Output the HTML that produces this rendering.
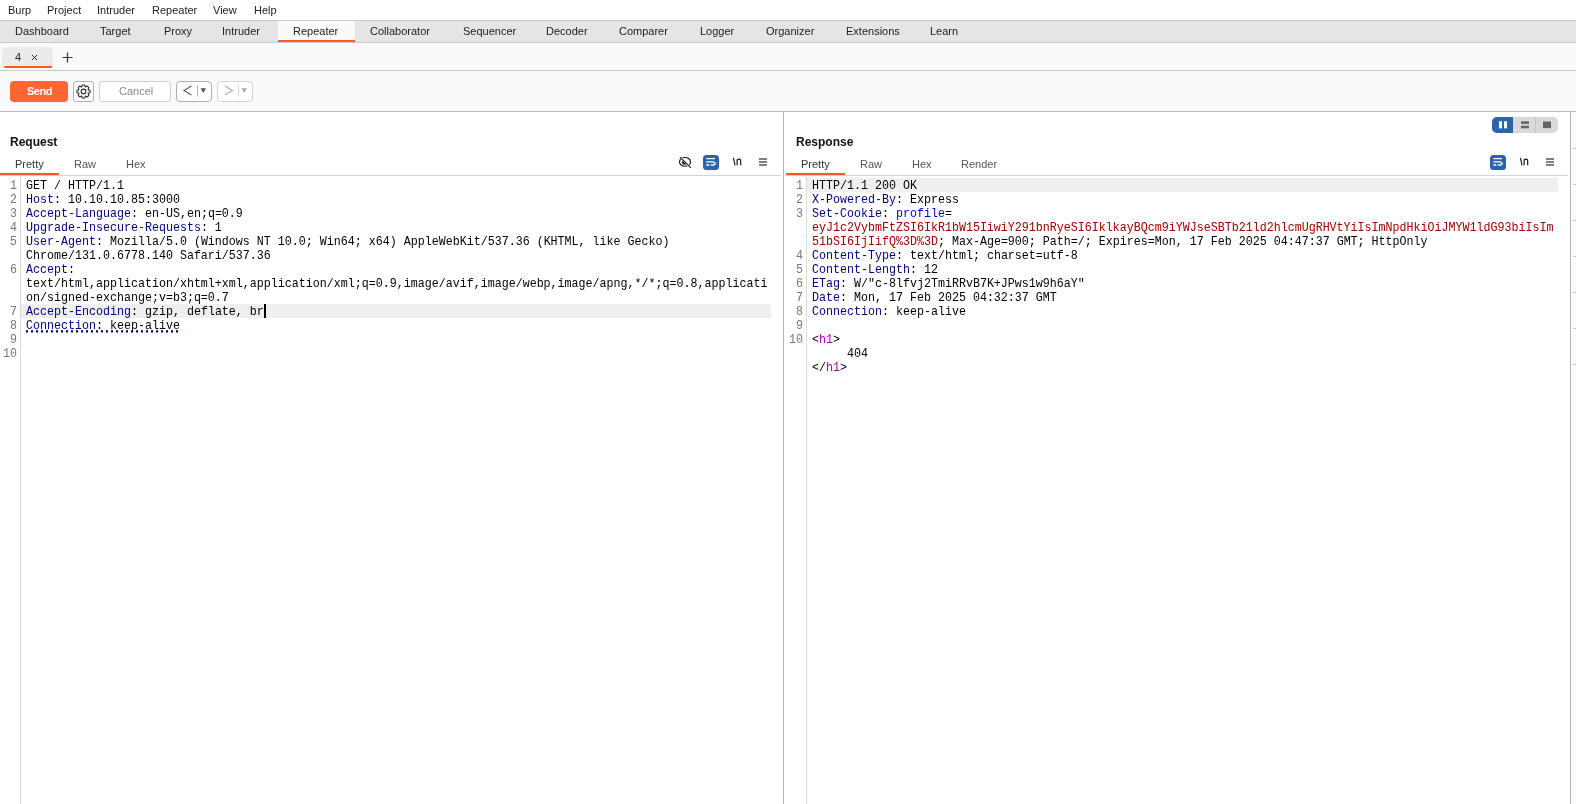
<!DOCTYPE html>
<html><head><meta charset="utf-8">
<style>
*{margin:0;padding:0;box-sizing:border-box}
html,body{width:1576px;height:804px;overflow:hidden;background:#fff}
body{position:relative;font-family:"Liberation Sans",sans-serif;font-size:11px;color:#222}
.a{position:absolute}
.t{position:absolute;white-space:pre;line-height:14px;will-change:transform}
.hl{position:absolute;height:1px}
.vl{position:absolute;width:1px}
.mono{font-family:"Liberation Mono",monospace;font-size:11.667px;line-height:14px;white-space:pre;color:#000}
.row{position:absolute;height:14px;white-space:pre;will-change:transform;transform:scaleY(1.15);transform-origin:0 3px}
.ln{position:absolute;height:14px;will-change:transform;text-align:right;color:#787878;transform:scaleY(1.15);transform-origin:0 3px;font-family:"Liberation Mono",monospace;font-size:11.667px;line-height:14px}
.k{color:#000080}
.pb{color:#0000c0}
.rd{color:#a00000}
.mg{color:#a800b8}
.dot{background-image:linear-gradient(90deg,#000080 2px,transparent 2px);background-size:5px 2px;background-repeat:repeat-x;background-position:0 11px;padding-bottom:0}
</style></head><body>
<!-- menu bar -->
<div class="a" style="left:0;top:0;width:1576px;height:20px;background:#fff"></div>
<div class="t" style="left:8px;top:3px">Burp</div>
<div class="t" style="left:47px;top:3px">Project</div>
<div class="t" style="left:97px;top:3px">Intruder</div>
<div class="t" style="left:152px;top:3px">Repeater</div>
<div class="t" style="left:213px;top:3px">View</div>
<div class="t" style="left:254px;top:3px">Help</div>
<div class="hl" style="left:0;top:20px;width:1576px;background:#c8c8c8"></div>
<!-- tab bar -->
<div class="a" style="left:0;top:21px;width:1576px;height:21px;background:#e5e5e5"></div>
<div class="a" style="left:278px;top:21px;width:77px;height:21px;background:#fafafa"></div>
<div class="a" style="left:278px;top:40px;width:77px;height:2px;background:#ff5a1f"></div>
<div class="hl" style="left:0;top:42px;width:1576px;background:#c6cbcc"></div>
<div class="t" style="left:15.0px;top:24px">Dashboard</div>
<div class="t" style="left:100.0px;top:24px">Target</div>
<div class="t" style="left:163.8px;top:24px">Proxy</div>
<div class="t" style="left:221.5px;top:24px">Intruder</div>
<div class="t" style="left:292.8px;top:24px">Repeater</div>
<div class="t" style="left:369.5px;top:24px">Collaborator</div>
<div class="t" style="left:462.5px;top:24px">Sequencer</div>
<div class="t" style="left:545.5px;top:24px">Decoder</div>
<div class="t" style="left:618.9px;top:24px">Comparer</div>
<div class="t" style="left:699.5px;top:24px">Logger</div>
<div class="t" style="left:765.5px;top:24px">Organizer</div>
<div class="t" style="left:845.5px;top:24px">Extensions</div>
<div class="t" style="left:929.5px;top:24px">Learn</div>
<!-- sub tab row -->
<div class="a" style="left:0;top:43px;width:1576px;height:27px;background:#fafafa"></div>
<div class="hl" style="left:0;top:70px;width:1576px;background:#c6cbcc"></div>
<!-- toolbar -->
<div class="a" style="left:0;top:71px;width:1576px;height:40px;background:#fafafa"></div>
<div class="hl" style="left:0;top:111px;width:1576px;background:#bdb5b5"></div>

<!-- subtab -->
<div class="a" style="left:2px;top:47px;width:51px;height:20px;background:#ebebeb;border-radius:4px 4px 0 0"></div>
<div class="a" style="left:4px;top:66px;width:48px;height:2px;background:#ff5a1f;border-radius:1px"></div>
<div class="t" style="left:15px;top:50px;color:#222">4</div>
<svg class="a" style="left:31px;top:54px" width="7" height="7" viewBox="0 0 7 7"><path d="M1 1L6 6M6 1L1 6" stroke="#222" stroke-width="0.95"/></svg>
<svg class="a" style="left:62px;top:52px" width="11" height="11" viewBox="0 0 11 11"><path d="M5.5 0.5V10.5M0.5 5.5H10.5" stroke="#333" stroke-width="1.2"/></svg>
<!-- toolbar buttons -->
<div class="a" style="left:10px;top:81px;width:58px;height:21px;background:#ff6633;border-radius:4px"></div>
<div class="t" style="left:27px;top:84px;color:#fff;font-weight:bold;letter-spacing:-0.5px">Send</div>
<div class="a" style="left:73px;top:81px;width:21px;height:21px;background:#fff;border:1px solid #b5b0b0;border-radius:3px"></div>
<svg class="a" style="left:75px;top:83px" width="17" height="17" viewBox="0 0 17 17" id="gear"><path d="M7.47 1.98 L9.53 1.98 L10.41 3.88 L12.38 3.16 L13.84 4.62 L13.12 6.59 L15.02 7.47 L15.02 9.53 L13.12 10.41 L13.84 12.38 L12.38 13.84 L10.41 13.12 L9.53 15.02 L7.47 15.02 L6.59 13.12 L4.62 13.84 L3.16 12.38 L3.88 10.41 L1.98 9.53 L1.98 7.47 L3.88 6.59 L3.16 4.62 L4.62 3.16 L6.59 3.88Z" fill="none" stroke="#333" stroke-width="1.2" stroke-linejoin="round"/><circle cx="8.5" cy="8.5" r="2.3" fill="none" stroke="#333" stroke-width="1.2"/></svg>
<div class="a" style="left:99px;top:81px;width:72px;height:21px;background:#fff;border:1px solid #cfcfcf;border-radius:3px"></div>
<div class="t" style="left:119px;top:84px;color:#8a8a8a">Cancel</div>
<div class="a" style="left:176px;top:81px;width:36px;height:21px;background:#fff;border:1px solid #b5adad;border-radius:4px"></div>
<svg class="a" style="left:176px;top:81px" width="36" height="21" viewBox="0 0 36 21"><path d="M15.5 5L8 9.5L15.5 14" fill="none" stroke="#555" stroke-width="1.1"/><path d="M21.5 4V15.5" stroke="#999" stroke-width="0.8"/><path d="M24.5 7.3H30L27.25 12Z" fill="#555"/></svg>
<div class="a" style="left:217px;top:81px;width:36px;height:21px;background:#fff;border:1px solid #d4d0d0;border-radius:4px"></div>
<svg class="a" style="left:217px;top:81px" width="36" height="21" viewBox="0 0 36 21"><path d="M8 5L15.5 9.5L8 14" fill="none" stroke="#aaa" stroke-width="1.1"/><path d="M21.5 4V15.5" stroke="#ccc" stroke-width="0.8"/><path d="M24.5 7.3H30L27.25 12Z" fill="#aaa"/></svg>
<!-- panels -->
<div class="vl" style="left:783px;top:112px;height:692px;background:#bab5b5"></div>
<div class="vl" style="left:1570px;top:112px;height:692px;background:#b6b1b1"></div>
<div class="a" style="left:1571px;top:112px;width:5px;height:692px;background:#fafafa"></div>
<div class="hl" style="left:1573px;top:148px;width:3px;background:#c8c8c8"></div>
<div class="hl" style="left:1573px;top:184px;width:3px;background:#c8c8c8"></div>
<div class="hl" style="left:1573px;top:220px;width:3px;background:#c8c8c8"></div>
<div class="hl" style="left:1573px;top:256px;width:3px;background:#c8c8c8"></div>
<div class="hl" style="left:1573px;top:292px;width:3px;background:#c8c8c8"></div>
<div class="hl" style="left:1573px;top:328px;width:3px;background:#c8c8c8"></div>
<div class="hl" style="left:1573px;top:364px;width:3px;background:#c8c8c8"></div>
<!-- request header -->
<div class="t" style="left:10px;top:135px;font-size:12px;font-weight:bold;color:#111">Request</div>
<div class="t" style="left:15px;top:157px;color:#333">Pretty</div>
<div class="t" style="left:74px;top:157px;color:#555">Raw</div>
<div class="t" style="left:126px;top:157px;color:#555">Hex</div>
<div class="a" style="left:0;top:173px;width:59px;height:2px;background:#ff5a1f"></div>
<div class="hl" style="left:0;top:175px;width:781px;background:#cfd4d4"></div>
<svg class="a" style="left:675px;top:152px" width="22" height="20" viewBox="0 0 22 20"><defs><clipPath id="pc"><path d="M0 1.2L20 21.2L0 21.2Z"/></clipPath></defs><ellipse cx="10" cy="9.9" rx="5.5" ry="4.4" fill="none" stroke="#111" stroke-width="1.1"/><path d="M5 5L15.6 15.6" stroke="#fff" stroke-width="2.2"/><circle cx="9.6" cy="10.3" r="2.5" fill="#111" clip-path="url(#pc)"/><path d="M5.3 5.3L15.4 15.4" stroke="#111" stroke-width="1.1" stroke-linecap="round"/></svg>
<div class="a" style="left:703px;top:155px;width:16px;height:15px;background:#2b65a5;border-radius:3.5px"></div>
<svg class="a" style="left:703px;top:155px" width="16" height="15" viewBox="0 0 16 15"><path d="M3.3 3.6H12" stroke="#fff" stroke-width="1.2"/><path d="M3.3 6.9H10.4L12.6 8.4L11 10" fill="none" stroke="#fff" stroke-width="1.2" stroke-linejoin="round"/><path d="M3.3 10H6.4M7.9 10H11.2" stroke="#fff" stroke-width="1.3"/></svg>
<svg class="a" style="left:732px;top:157px" width="10" height="10" viewBox="0 0 10 10"><path d="M1.4 0.9L3.1 8.3" stroke="#111" stroke-width="1.1"/><path d="M5.1 8.3V2.2M5.1 3.4C5.6 2.5 6.3 2.1 7.1 2.1C8.2 2.1 8.7 2.8 8.7 4V8.3" fill="none" stroke="#111" stroke-width="1.15"/></svg>
<svg class="a" style="left:759px;top:158px" width="8" height="8" viewBox="0 0 8 8"><path d="M0 1H8M0 4H8M0 7H8" stroke="#555" stroke-width="1.6"/></svg>
<!-- response header -->
<div class="t" style="left:796px;top:135px;font-size:12px;font-weight:bold;color:#111">Response</div>
<div class="t" style="left:801px;top:157px;color:#333">Pretty</div>
<div class="t" style="left:860px;top:157px;color:#555">Raw</div>
<div class="t" style="left:912px;top:157px;color:#555">Hex</div>
<div class="t" style="left:961px;top:157px;color:#555">Render</div>
<div class="a" style="left:786px;top:173px;width:59px;height:2px;background:#ff5a1f"></div>
<div class="hl" style="left:786px;top:175px;width:782px;background:#cfd4d4"></div>
<div class="a" style="left:1490px;top:155px;width:16px;height:15px;background:#2b65a5;border-radius:3.5px"></div>
<svg class="a" style="left:1490px;top:155px" width="16" height="15" viewBox="0 0 16 15"><path d="M3.3 3.6H12" stroke="#fff" stroke-width="1.2"/><path d="M3.3 6.9H10.4L12.6 8.4L11 10" fill="none" stroke="#fff" stroke-width="1.2" stroke-linejoin="round"/><path d="M3.3 10H6.4M7.9 10H11.2" stroke="#fff" stroke-width="1.3"/></svg>
<svg class="a" style="left:1519px;top:157px" width="10" height="10" viewBox="0 0 10 10"><path d="M1.4 0.9L3.1 8.3" stroke="#111" stroke-width="1.1"/><path d="M5.1 8.3V2.2M5.1 3.4C5.6 2.5 6.3 2.1 7.1 2.1C8.2 2.1 8.7 2.8 8.7 4V8.3" fill="none" stroke="#111" stroke-width="1.15"/></svg>
<svg class="a" style="left:1546px;top:158px" width="8" height="8" viewBox="0 0 8 8"><path d="M0 1H8M0 4H8M0 7H8" stroke="#555" stroke-width="1.6"/></svg>
<div class="a" style="left:1492px;top:117px;width:66px;height:16px;background:#d9d9d9;border-radius:5px;overflow:hidden"><div class="a" style="left:0;top:0;width:21px;height:16px;background:#2b65a5"></div><div class="a" style="left:43px;top:0;width:1px;height:16px;background:#c4c4c4"></div></div>
<svg class="a" style="left:1492px;top:117px" width="66" height="16" viewBox="0 0 66 16"><rect x="7" y="4.3" width="3" height="7" fill="#fff"/><rect x="12" y="4.3" width="3" height="7" fill="#fff"/><rect x="29" y="4.3" width="8" height="2.6" fill="#666"/><rect x="29" y="8.7" width="8" height="2.6" fill="#666"/><rect x="51" y="4.5" width="8" height="6.6" fill="#666"/></svg>
<!-- editors -->
<div class="vl" style="left:20px;top:176px;height:628px;background:#dcdcdc"></div>
<div class="vl" style="left:806px;top:176px;height:628px;background:#dcdcdc"></div>
<div class="a" style="left:21px;top:304px;width:750px;height:14px;background:#efefef"></div>
<div class="ln" style="left:-0.5px;top:178px;width:17px">1</div>
<div class="row mono" style="left:26px;top:178px">GET / HTTP/1.1</div>
<div class="ln" style="left:-0.5px;top:192px;width:17px">2</div>
<div class="row mono" style="left:26px;top:192px"><span class="k">Host</span>: 10.10.10.85:3000</div>
<div class="ln" style="left:-0.5px;top:206px;width:17px">3</div>
<div class="row mono" style="left:26px;top:206px"><span class="k">Accept-Language</span>: en-US,en;q=0.9</div>
<div class="ln" style="left:-0.5px;top:220px;width:17px">4</div>
<div class="row mono" style="left:26px;top:220px"><span class="k">Upgrade-Insecure-Requests</span>: 1</div>
<div class="ln" style="left:-0.5px;top:234px;width:17px">5</div>
<div class="row mono" style="left:26px;top:234px"><span class="k">User-Agent</span>: Mozilla/5.0 (Windows NT 10.0; Win64; x64) AppleWebKit/537.36 (KHTML, like Gecko)</div>
<div class="row mono" style="left:26px;top:248px">Chrome/131.0.6778.140 Safari/537.36</div>
<div class="ln" style="left:-0.5px;top:262px;width:17px">6</div>
<div class="row mono" style="left:26px;top:262px"><span class="k">Accept</span>:</div>
<div class="row mono" style="left:26px;top:276px">text/html,application/xhtml+xml,application/xml;q=0.9,image/avif,image/webp,image/apng,*/*;q=0.8,applicati</div>
<div class="row mono" style="left:26px;top:290px">on/signed-exchange;v=b3;q=0.7</div>
<div class="ln" style="left:-0.5px;top:304px;width:17px">7</div>
<div class="row mono" style="left:26px;top:304px"><span class="k">Accept-Encoding</span>: gzip, deflate, br</div>
<div class="ln" style="left:-0.5px;top:318px;width:17px">8</div>
<div class="row mono" style="left:26px;top:318px"><span class="dot"><span class="k">Connection</span>: keep-alive</span></div>
<div class="ln" style="left:-0.5px;top:332px;width:17px">9</div>
<div class="ln" style="left:-0.5px;top:346px;width:17px">10</div>
<div class="a" style="left:264px;top:304px;width:2px;height:14px;background:#000"></div>
<div class="a" style="left:807px;top:178px;width:751px;height:14px;background:#efefef"></div>
<div class="ln" style="left:785.5px;top:178px;width:17px">1</div>
<div class="row mono" style="left:812px;top:178px">HTTP/1.1 200 OK</div>
<div class="ln" style="left:785.5px;top:192px;width:17px">2</div>
<div class="row mono" style="left:812px;top:192px"><span class="k">X-Powered-By</span>: Express</div>
<div class="ln" style="left:785.5px;top:206px;width:17px">3</div>
<div class="row mono" style="left:812px;top:206px"><span class="k">Set-Cookie</span>: <span class="pb">profile</span>=</div>
<div class="row mono" style="left:812px;top:220px"><span class="rd">eyJ1c2VybmFtZSI6IkR1bW15IiwiY291bnRyeSI6IklkayBQcm9iYWJseSBTb21ld2hlcmUgRHVtYiIsImNpdHkiOiJMYW1ldG93biIsIm</span></div>
<div class="row mono" style="left:812px;top:234px"><span class="rd">51bSI6IjIifQ%3D%3D</span>; Max-Age=900; Path=/; Expires=Mon, 17 Feb 2025 04:47:37 GMT; HttpOnly</div>
<div class="ln" style="left:785.5px;top:248px;width:17px">4</div>
<div class="row mono" style="left:812px;top:248px"><span class="k">Content-Type</span>: text/html; charset=utf-8</div>
<div class="ln" style="left:785.5px;top:262px;width:17px">5</div>
<div class="row mono" style="left:812px;top:262px"><span class="k">Content-Length</span>: 12</div>
<div class="ln" style="left:785.5px;top:276px;width:17px">6</div>
<div class="row mono" style="left:812px;top:276px"><span class="k">ETag</span>: W/"c-8lfvj2TmiRRvB7K+JPws1w9h6aY"</div>
<div class="ln" style="left:785.5px;top:290px;width:17px">7</div>
<div class="row mono" style="left:812px;top:290px"><span class="k">Date</span>: Mon, 17 Feb 2025 04:32:37 GMT</div>
<div class="ln" style="left:785.5px;top:304px;width:17px">8</div>
<div class="row mono" style="left:812px;top:304px"><span class="k">Connection</span>: keep-alive</div>
<div class="ln" style="left:785.5px;top:318px;width:17px">9</div>
<div class="ln" style="left:785.5px;top:332px;width:17px">10</div>
<div class="row mono" style="left:812px;top:332px">&lt;<span class="mg">h1</span>&gt;</div>
<div class="row mono" style="left:812px;top:346px">     404</div>
<div class="row mono" style="left:812px;top:360px">&lt;/<span class="mg">h1</span>&gt;</div>
</body></html>
